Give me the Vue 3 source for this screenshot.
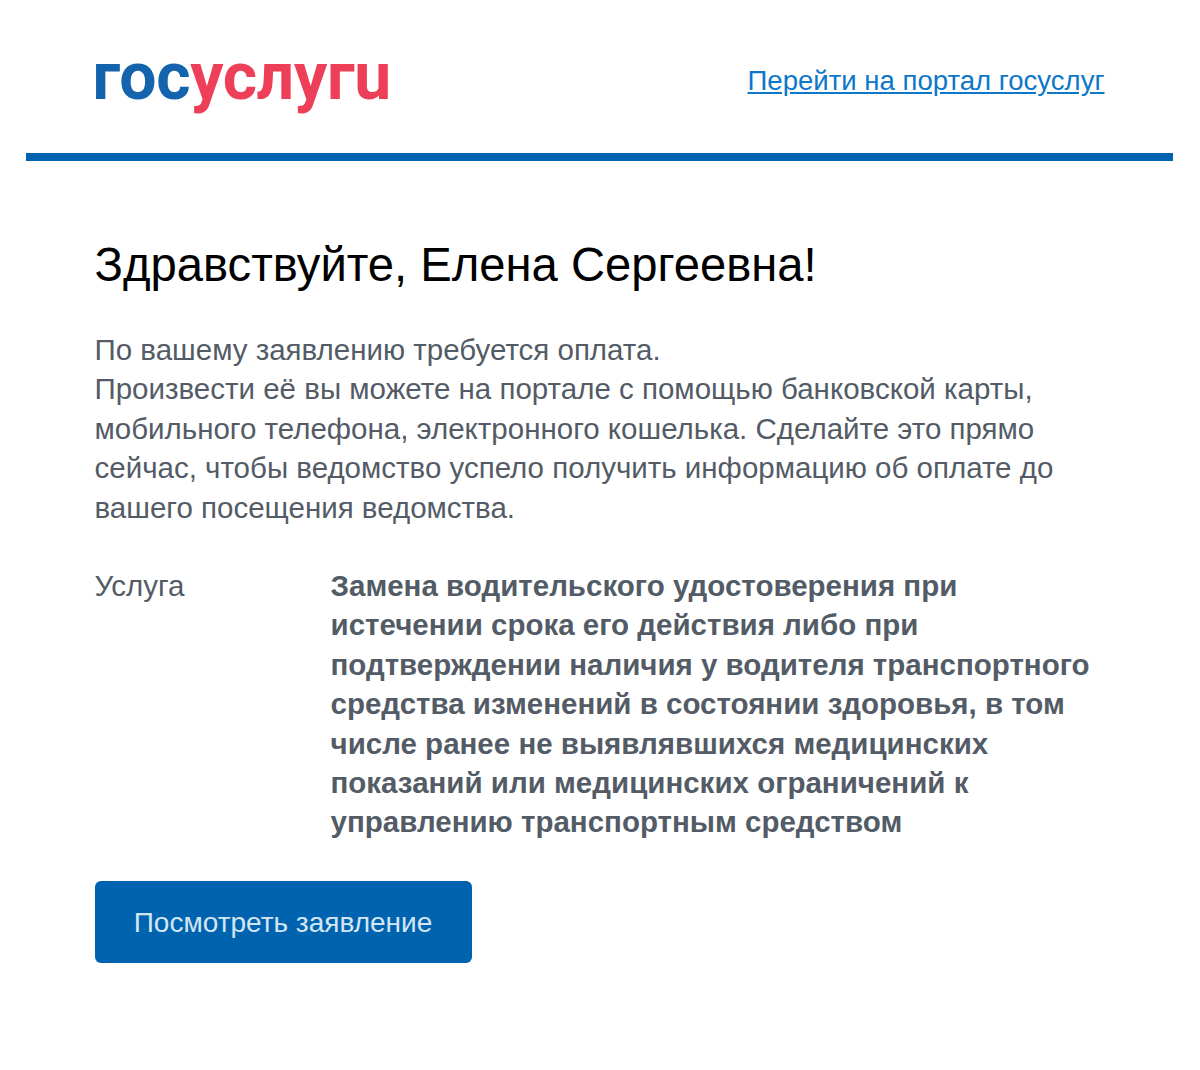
<template>
  <div class="page">
    <header class="head">
      <div class="logo"><span class="blue">гос</span><span class="red">услуг</span><span class="red">u</span></div>
      <a class="portal" href="#">Перейти на портал госуслуг</a>
    </header>
    <main class="body">
      <h1>Здравствуйте, Елена Сергеевна!</h1>
      <p class="txt">По вашему заявлению требуется оплата.<br>Произвести её вы можете на портале с помощью банковской карты, мобильного телефона, электронного кошелька. Сделайте это прямо сейчас, чтобы ведомство успело получить информацию об оплате до вашего посещения ведомства.</p>
      <div class="row">
        <div class="label">Услуга</div>
        <div class="value">Замена водительского удостоверения при истечении срока его действия либо при подтверждении наличия у водителя транспортного средства изменений в состоянии здоровья, в том числе ранее не выявлявшихся медицинских показаний или медицинских ограничений к управлению транспортным средством</div>
      </div>
      <a class="btn" href="#">Посмотреть заявление</a>
    </main>
  </div>
</template>

<script setup>
</script>

<style>
html, body { background: #fff; margin: 0; }
</style>

<style scoped>
.page { width: 1147px; height: 1070px; margin-left: 25.5px; font-family: "Liberation Sans", Arial, sans-serif; box-sizing: border-box; }
.head { height: 153px; border-bottom: 8px solid #0063b0; display: flex; justify-content: space-between; align-items: flex-start; padding: 0 68px 0 67px; }
.logo { font-family: Roboto, sans-serif; font-weight: 700; font-size: 66px; line-height: 66px; letter-spacing: -0.3px; margin-top: 44px; height: 66px; white-space: nowrap; }
.blue { color: #1463ad; }
.red { color: #ee3f58; }
.portal { margin-top: 65px; font-size: 27.55px; line-height: 32px; color: #0d77c9; text-decoration: underline; }
.body { padding: 0 60px 0 69px; }
h1 { margin: 74px 0 0; font-size: 47.2px; line-height: 60px; font-weight: 400; color: #000; }
.txt { margin: 35px 0 0; font-size: 29.5px; line-height: 39.4px; color: #535c66; }
.row { display: flex; margin-top: 39px; font-size: 29.5px; line-height: 39.4px; color: #535c66; }
.label { width: 236px; flex: none; }
.value { font-weight: 700; width: 770px; }
.btn { display: flex; align-items: center; justify-content: center; box-sizing: border-box; padding-top: 2px; margin-top: 39px; width: 377px; height: 82px; border-radius: 6px; background: #0063b0; color: #d5e6f3; font-size: 28px; text-decoration: none; }
</style>
